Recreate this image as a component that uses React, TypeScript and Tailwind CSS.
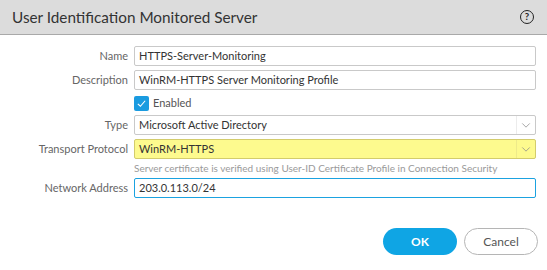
// --- Sub-components ---

const Label = ({ children }: { children: string }) => (
  <div className="flex h-5 items-center justify-end text-[11px] text-[#666]">
    {children}
  </div>
);

const TextBox = ({ value, focused }: { value: string; focused?: boolean }) => (
  <div
    className={
      "flex h-5 items-center rounded-[2px] border bg-white px-[4px] text-[11px] text-[#333] " +
      (focused ? "border-[#1ba2e0]" : "border-[#c9c9c9]")
    }
  >
    {value}
  </div>
);

const Chevron = () => (
  <svg viewBox="0 0 10 6" className="h-[5px] w-[10px]">
    <path d="M0.5 0.5 L5 5 L9.5 0.5" fill="none" stroke="#8a8a8a" strokeWidth="0.9" />
  </svg>
);

const Select = ({ value, highlight }: { value: string; highlight?: boolean }) => (
  <div
    className={
      "flex h-5 items-center rounded-[2px] border text-[11px] text-[#333] " +
      (highlight ? "border-[#d3cc6c] bg-[#fdfa8e]" : "border-[#c9c9c9] bg-white")
    }
  >
    <span className="flex-1 px-[4px]">{value}</span>
    <span
      className={
        "flex h-full w-[19px] items-center justify-center border-l " +
        (highlight ? "border-[#eeea8a]" : "border-[#ececec]")
      }
    >
      <Chevron />
    </span>
  </div>
);

export default function App() {
  return (
    <div
      className="h-[270px] w-[547px] overflow-hidden bg-white"
      style={{ fontFamily: "Lato, 'Open Sans', sans-serif" }}
    >
      {/* header */}
      <div className="flex h-[35px] items-center justify-between border-b border-[#a9a9a9] bg-[#dcdcdc] pl-3 pr-[13px]">
        <span className="text-[15.3px] text-[#333]">User Identification Monitored Server</span>
        <span className="flex h-[14px] w-[14px] items-center justify-center rounded-full border-[1.3px] border-[#222] text-[9.5px] font-bold text-[#222]">
          ?
        </span>
      </div>

      {/* form */}
      <div className="mt-[11px] grid grid-cols-[128px_402px] gap-x-[6px]">
        <Label>Name</Label>
        <TextBox value="HTTPS-Server-Monitoring" />

        <div className="mt-1">
          <Label>Description</Label>
        </div>
        <div className="mt-1">
          <TextBox value="WinRM-HTTPS Server Monitoring Profile" />
        </div>

        <div />
        <div className="mt-[6px] flex h-[15px] items-center gap-[4px] text-[11px] text-[#555]">
          <span className="flex h-[15px] w-[15px] items-center justify-center rounded-[2px] bg-[#1a9be0]">
            <svg viewBox="0 0 12 12" className="h-[11px] w-[11px]">
              <path d="M2 6.3 L4.8 9 L10 3" fill="none" stroke="white" strokeWidth="1.2" />
            </svg>
          </span>
          Enabled
        </div>

        <div className="mt-[4px]">
          <Label>Type</Label>
        </div>
        <div className="mt-[4px]">
          <Select value="Microsoft Active Directory" />
        </div>

        <div className="mt-1">
          <Label>Transport Protocol</Label>
        </div>
        <div className="mt-1">
          <Select value="WinRM-HTTPS" highlight />
        </div>

        <div />
        <div className="mt-[2px] text-[10px] leading-[14px] text-[#9a9a9a]">
          Server certificate is verified using User-ID Certificate Profile in Connection Security
        </div>

        <div className="mt-[3px]">
          <Label>Network Address</Label>
        </div>
        <div className="mt-[3px]">
          <TextBox value="203.0.113.0/24" focused />
        </div>
      </div>

      {/* footer */}
      <div className="mt-[30px] flex justify-end gap-[7px] pr-[9px]">
        <button className="h-[27px] w-[74px] rounded-full bg-[#0fa5e4] text-[12px] font-bold text-white">
          OK
        </button>
        <button className="h-[27px] w-[74px] rounded-full border border-[#b5b5b5] bg-white text-[12px] text-[#555]">
          Cancel
        </button>
      </div>
    </div>
  );
}
